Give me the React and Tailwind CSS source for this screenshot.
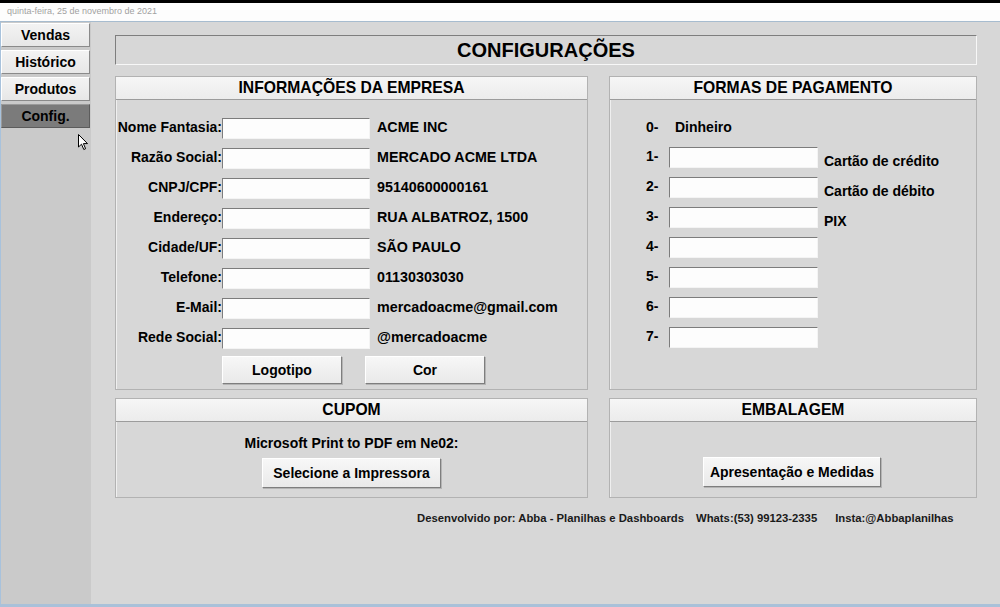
import React from "react";

const FONT = { fontFamily: '"Liberation Sans", Arial, sans-serif' };

const MENU = ["Vendas", "Histórico", "Produtos", "Config."];

const EMPRESA = [
  ["Nome Fantasia:", "ACME INC"],
  ["Razão Social:", "MERCADO ACME LTDA"],
  ["CNPJ/CPF:", "95140600000161"],
  ["Endereço:", "RUA ALBATROZ, 1500"],
  ["Cidade/UF:", "SÃO PAULO"],
  ["Telefone:", "01130303030"],
  ["E-Mail:", "mercadoacme@gmail.com"],
  ["Rede Social:", "@mercadoacme"],
];

const PAGAMENTOS = ["Cartão de crédito", "Cartão de débito", "PIX", "", "", "", ""];

// caixa de texto com borda rebaixada estilo Windows
function Campo({ className = "" }) {
  return (
    <div
      className={`h-[21px] shrink-0 bg-[#fdfdfd] border border-t-[#7c7c7c] border-l-[#7c7c7c] border-b-[#f4f4f4] border-r-[#f4f4f4] ${className}`}
    />
  );
}

// botão em relevo
function Botao({ children, className = "" }) {
  return (
    <button
      className={`bg-gradient-to-b from-[#f7f7f7] to-[#e9e9e9] border border-t-white border-l-white border-b-[#7e7e7e] border-r-[#7e7e7e] shadow-[1px_1px_0_#b4b4b4] text-[14px] font-bold text-black ${className}`}
    >
      {children}
    </button>
  );
}

function Painel({ titulo, className = "", children }) {
  return (
    <div
      className={`flex flex-col border border-[#b2b2b2] shadow-[inset_1px_1px_0_#efefef] ${className}`}
    >
      <div className="h-[23px] shrink-0 bg-gradient-to-b from-[#f6f6f6] to-[#ececec] border-b border-[#9c9c9c] flex items-center justify-center text-[15.7px] font-bold text-black">
        {titulo}
      </div>
      <div className="flex-1 flex flex-col">{children}</div>
    </div>
  );
}

export default function App() {
  return (
    <div
      className="w-[1000px] h-[607px] flex flex-col bg-[#d7d7d7] text-black overflow-hidden relative"
      style={FONT}
    >
      <div className="h-[3px] bg-black" />
      <div className="h-[18px] bg-[#fdfdfd] flex items-center pl-[7px] text-[9px] text-[#a2a2a2]">
        quinta-feira, 25 de novembro de 2021
      </div>
      <div className="h-px bg-[#a7bccf]" />

      <div className="flex flex-1 border-l border-[#a8c2dc]">
        {/* menu lateral */}
        <div className="w-[90px] bg-[#cacaca] flex flex-col gap-[3px] pt-px pr-px">
          {MENU.map((item) => {
            const ativo = item === "Config.";
            return (
              <div
                key={item}
                className={`h-[24px] flex items-center justify-center text-[14px] font-bold border ${
                  ativo
                    ? "bg-[#7b7b7b] border-t-[#9a9a9a] border-l-[#9a9a9a] border-b-[#5c5c5c] border-r-[#5c5c5c]"
                    : "bg-gradient-to-b from-[#f3f3f3] to-[#e7e7e7] border-t-white border-l-white border-b-[#8a8a8a] border-r-[#8a8a8a]"
                }`}
              >
                {item}
              </div>
            );
          })}
        </div>

        {/* conteúdo */}
        <div className="flex-1 flex flex-col pt-[13px] pl-[24px] pr-[23px]">
          <div className="h-[30px] flex items-center justify-center border border-t-[#7e7e7e] border-l-[#7e7e7e] border-b-[#f7f7f7] border-r-[#f7f7f7] text-[20px] font-bold">
            CONFIGURAÇÕES
          </div>

          <div className="flex gap-[21px] mt-[11px] h-[314px]">
            <Painel titulo="INFORMAÇÕES DA EMPRESA" className="w-[473px]">
              <div className="flex flex-col gap-[9px] pt-[18px]">
                {EMPRESA.map(([rotulo, valor]) => (
                  <div key={rotulo} className="flex items-start h-[21px] text-[14px] leading-[18px] font-bold">
                    <span className="w-[106px] text-right">{rotulo}</span>
                    <Campo className="w-[148px]" />
                    <span className="ml-[7px] text-[14.3px]">{valor}</span>
                  </div>
                ))}
              </div>
              <div className="flex gap-[23px] pl-[106px] mt-[7px]">
                <Botao className="w-[120px] h-[28px]">Logotipo</Botao>
                <Botao className="w-[120px] h-[28px]">Cor</Botao>
              </div>
            </Painel>

            <Painel titulo="FORMAS DE PAGAMENTO" className="flex-1">
              <div className="flex flex-col pt-[17px] pl-[36px]">
                <div className="flex items-center h-[20px] text-[14px] font-bold">
                  <span className="w-[29px]">0-</span>
                  <span>Dinheiro</span>
                </div>
                <div className="flex flex-col gap-[9px] mt-[10px]">
                  {PAGAMENTOS.map((nome, i) => (
                    <div key={i} className="flex items-start h-[21px] text-[14px] font-bold">
                      <span className="w-[23px] leading-[19px]">{i + 1}-</span>
                      <Campo className="w-[149px]" />
                      {nome && <span className="ml-[6px] mt-[7px] leading-[14px]">{nome}</span>}
                    </div>
                  ))}
                </div>
              </div>
            </Painel>
          </div>

          <div className="flex gap-[21px] mt-[8px] h-[100px]">
            <Painel titulo="CUPOM" className="w-[473px]">
              <div className="flex flex-col items-center pt-[12px]">
                <span className="text-[14px] font-bold leading-[18px]">Microsoft Print to PDF em Ne02:</span>
                <Botao className="w-[179px] h-[30px] mt-[6px]">Selecione a Impressora</Botao>
              </div>
            </Painel>
            <Painel titulo="EMBALAGEM" className="flex-1">
              <div className="flex justify-center pt-[35px] pr-[2px]">
                <Botao className="w-[178px] h-[30px]">Apresentação e Medidas</Botao>
              </div>
            </Painel>
          </div>

          <div className="flex mt-[13px] pl-[302px] text-[11.3px] font-bold leading-[14px] text-[#1a1a1a]">
            <span>Desenvolvido por: Abba - Planilhas e Dashboards</span>
            <span className="ml-[12px]">Whats:(53) 99123-2335</span>
            <span className="ml-[18px]">Insta:@Abbaplanilhas</span>
          </div>
        </div>
      </div>
      <div className="h-[3px] bg-[#a9c1d9]" />

      {/* ponteiro do mouse */}
      <svg className="absolute left-[78px] top-[134px]" width="12" height="17" viewBox="0 0 12 17">
        <path d="M0.5 0.5 L0.5 13 L3.5 10.2 L5.8 15.5 L7.6 14.7 L5.4 9.6 L9.5 9.6 Z" fill="#fff" stroke="#000" strokeWidth="1" strokeLinejoin="round" />
      </svg>
    </div>
  );
}
